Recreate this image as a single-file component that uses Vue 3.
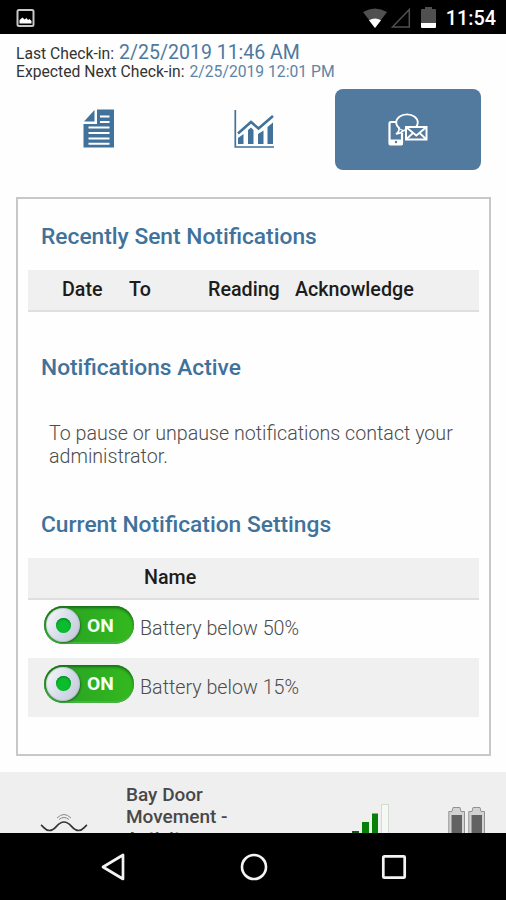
<script setup>
const columns = ['Date', 'To', 'Reading', 'Acknowledge']
const settings = ['Battery below 50%', 'Battery below 15%']
</script>

<template>
  <div class="screen">
    <header class="status">
      <svg class="picture" width="19" height="18" viewBox="0 0 19 18">
        <rect x="1.500" y="1" width="16" height="16" rx="1.500" fill="none" stroke="#c8c8c8" stroke-width="2" />
        <path d="M3.500 14.500V11L6.500 8.500L8.500 10.500L10.500 9L12 11L13.500 10L15.500 12V14.500Z" fill="#fff" />
      </svg>
      <div class="indicators">
        <svg width="26" height="20" viewBox="0 0 26 20">
          <path d="M1 4Q13-3 25 4L13 20Z" fill="#505050" />
          <path d="M7 12.200Q13 9 19 12.200L13 20Z" fill="#fff" />
        </svg>
        <svg width="20" height="20" viewBox="0 0 20 20">
          <path d="M18.300 1.500V19H1.500Z" fill="none" stroke="#505050" stroke-width="1.500" />
        </svg>
        <svg class="cell" width="15" height="22" viewBox="0 0 15 22">
          <path d="M0 3Q0 2 1 2H4V0H11V2H14Q15 2 15 3V16H0Z" fill="#505050" />
          <path d="M0 16H15V20Q15 21 14 21H1Q0 21 0 20Z" fill="#fff" />
        </svg>
        <span class="clock">11:54</span>
      </div>
    </header>

    <main class="page">
      <section class="checkins">
        <p class="last"><span>Last Check-in:</span><b>2/25/2019 11:46 AM</b></p>
        <p class="next"><span>Expected Next Check-in:</span><b>2/25/2019 12:01 PM</b></p>
      </section>

      <nav class="tabs">
        <button class="tab" aria-label="Report">
          <svg width="32" height="40" viewBox="0 0 32 40">
            <path d="M14 .5H31V38.500H.5V15H14Z" fill="#40729b" />
            <path d="M11.500 1V12.500H1Z" fill="#40729b" />
            <path d="M17 7.500H26.500M17 13H26.500M5.500 18.500H26.500M5.500 24H26.500M5.500 29.500H26.500M5.500 34.700H26.500" stroke="#fff" stroke-width="2" />
          </svg>
        </button>
        <button class="tab" aria-label="Chart">
          <svg width="40" height="40" viewBox="0 0 40 40">
            <path d="M1.300 1V38H40" fill="none" stroke="#40729b" stroke-width="1.700" />
            <path d="M4 24.500L17 13L24.500 19.500L39 7" fill="none" stroke="#40729b" stroke-width="2.600" />
            <path d="M4 35V29L9.500 25V35ZM14 35V21L17 18.500L19.500 21V35ZM24 35V25L29.500 21.500V35ZM33.500 35V18L39 13.500V35Z" fill="#40729b" />
          </svg>
        </button>
        <button class="tab active" aria-label="Notifications">
          <svg width="40" height="34" viewBox="0 0 40 34">
            <path d="M14 9H3Q1.500 9 1.500 10.500V30Q1.500 31.500 3 31.500H12.500Q14 31.500 14 30V20" fill="none" stroke="#fff" stroke-width="2.200" />
            <rect x="1" y="26.500" width="14" height="5.500" rx="1" fill="#fff" />
            <circle cx="8" cy="29" r="1.200" fill="#527a9e" />
            <path d="M11 15Q11.500 19 8 21Q13 20.500 16 17" fill="#527a9e" stroke="#fff" stroke-width="1.600" />
            <ellipse cx="19" cy="9.500" rx="10.800" ry="8.200" fill="#527a9e" stroke="#fff" stroke-width="1.800" />
            <path d="M12.300 14.500L16 16" stroke="#527a9e" stroke-width="2.200" />
            <rect x="18" y="14" width="20.500" height="12.500" fill="#527a9e" stroke="#fff" stroke-width="2" />
            <path d="M18 14L28.300 22.500L38.500 14M18 26.500L25 20M38.500 26.500L31.500 20" fill="none" stroke="#fff" stroke-width="1.800" />
          </svg>
        </button>
      </nav>

      <section class="card">
        <h2 class="sent">Recently Sent Notifications</h2>
        <div class="head columns">
          <span v-for="column in columns" :key="column">{{ column }}</span>
        </div>
        <h2 class="active-title">Notifications Active</h2>
        <p class="note">To pause or unpause notifications contact your administrator.</p>
        <h2 class="current">Current Notification Settings</h2>
        <div class="head name"><span>Name</span></div>
        <div v-for="item in settings" :key="item" class="setting">
          <button class="toggle"><i class="knob"></i><span>ON</span></button>
          <span class="label">{{ item }}</span>
        </div>
      </section>

      <section class="sensor">
        <svg class="wave" width="48" height="22" viewBox="0 0 48 22">
          <path d="M1 12C4 14 5 17.500 9.500 17.500C16 17.500 17 9 24 9C31 9 32 17.500 38.500 17.500C43 17.500 44 14 47 12" fill="none" stroke="#333" stroke-width="1.700" />
          <path d="M17 5Q24-2 31 5M19 6.500Q24 2.500 29 6.500" fill="none" stroke="#888" stroke-width="1" />
        </svg>
        <p class="title">Bay Door<br />Movement -<br />Activity</p>
        <svg class="signal" width="38" height="38" viewBox="0 0 38 38">
          <path d="M0 27H7V38H0Z" fill="#16551d" />
          <path d="M10 18H17V38H10ZM20 9.500H26V38H20Z" fill="#078009" />
          <rect x="29.500" y=".5" width="7" height="38" fill="#f6f8f6" stroke="#cfddcf" />
        </svg>
        <svg class="batteries" width="38" height="38" viewBox="0 0 38 38">
          <g v-for="x in [0, 20]" :key="x" :transform="`translate(${x} 0)`">
            <path d="M.8 38V5.500H4L5 1.500H12L13 5.500H16.500V38" fill="#d2d2d2" stroke="#929292" />
            <path d="M3.500 38V9H14V38Z" fill="#626262" />
          </g>
        </svg>
      </section>
    </main>

    <footer class="navbar">
      <svg width="26" height="28" viewBox="0 0 26 28"><path d="M23 2V26L3 14Z" fill="none" stroke="#f4f4f4" stroke-width="2.700" stroke-linejoin="round" /></svg>
      <svg width="28" height="28" viewBox="0 0 28 28"><circle cx="14" cy="14" r="12" fill="none" stroke="#f4f4f4" stroke-width="2.600" /></svg>
      <svg width="26" height="28" viewBox="0 0 26 28"><rect x="2.300" y="3.300" width="21.400" height="21.400" rx="1" fill="none" stroke="#f4f4f4" stroke-width="2.700" /></svg>
    </footer>
  </div>
</template>

<style>
body { margin: 0; background: #fff; }
</style>

<style scoped>
* { box-sizing: border-box; }
.screen { width: 506px; height: 900px; display: flex; flex-direction: column; overflow: hidden; background: #fefefe; font-family: Roboto, sans-serif; }
h2, p { margin: 0; }
button { border: 0; padding: 0; background: none; font-family: inherit; }
svg { display: block; flex: none; }
.status { height: 34px; flex: none; padding: 0 10px 0 16px; display: flex; align-items: center; justify-content: space-between; background: #000; }
.picture { margin-top: 1px; }
.indicators { display: flex; align-items: center; }
.indicators svg { margin-top: 1px; }
.indicators svg + svg { margin-left: 3px; }
.indicators .cell.cell { margin-left: 10px; }
.clock { margin-left: 10px; color: #fff; font-size: 19.800px; font-weight: 500; line-height: 32px; padding-top: 4px; }
.page { height: 799px; flex: none; overflow: hidden; }
.checkins { height: 55px; padding: 8px 16px 0; color: #333; }
.checkins p { display: flex; align-items: baseline; white-space: nowrap; font-size: 15.700px; }
.checkins b { margin-left: 5px; color: #4d799f; font-weight: 400; }
.checkins .last { height: 20px; line-height: 21px; }
.checkins .last b { font-size: 19.500px; }
.checkins .next { height: 18px; line-height: 20px; }
.checkins .next b { color: #6184a5; }
.tabs { display: grid; grid-template-columns: 155px 155px 146px; height: 81px; padding-left: 25px; }
.tab { display: flex; align-items: center; justify-content: center; padding-right: 8px; padding-bottom: 1px; }
.tab.active { padding: 0; background: #527a9e; border-radius: 8px; }
.card { width: 475px; height: 559px; margin: 27px 0 0 16px; padding: 0 10px; border: 2px solid #c8c8c8; background: #fefefe; }
h2 { padding-left: 13px; color: #40729b; font-size: 22.750px; line-height: 28px; font-weight: 500; white-space: nowrap; }
.sent { margin-top: 24px; }
.head { height: 42px; border-bottom: 2px solid #dfdfdf; background: #f0f0f0; color: #1c1c1c; font-size: 19.700px; line-height: 40px; font-weight: 500; white-space: nowrap; }
.columns { margin-top: 19px; padding-left: 34px; display: grid; grid-template-columns: 67px 79px 87px 1fr; }
.active-title { margin-top: 42px; }
.note { margin-top: 40px; padding-left: 21px; color: #4c4c4c; font-size: 19.670px; line-height: 23px; font-weight: 300; }
.current { margin-top: 43px; }
.name { margin-top: 19px; padding-left: 116px; }
.setting { height: 58px; display: flex; align-items: center; padding-left: 16px; }
.setting:last-child { height: 59px; background: #f0f0f0; }
.toggle { width: 90px; height: 38px; margin-top: -8px; padding: 2px; flex: none; display: flex; align-items: center; border-radius: 19px; background: linear-gradient(90deg, #269f25, #34b91e); box-shadow: inset 0 2px 3px #176b18, inset 0 -2px 1px #48b642; }
.knob { width: 34px; height: 34px; display: grid; place-items: center; border-radius: 50%; background: linear-gradient(120deg, #fafafa, #d5dbea 55%, #c3c8d5); box-shadow: 1px 1px 2px #246c24, inset 0 0 2px #8f9ba5; }
.knob::after { content: ''; width: 15px; height: 15px; border-radius: 50%; background: #0abc2e; box-shadow: inset 0 1px 2px #077b23; }
.toggle span { margin-left: 7px; color: #f3fff2; font-size: 19.200px; font-weight: 700; }
.label { margin: -1px 0 0 6px; color: #4c4c4c; font-size: 19.700px; font-weight: 300; }
.sensor { height: 61px; margin-top: 16px; padding-left: 40px; display: flex; overflow: hidden; background: #efefef; }
.wave { margin-top: 41px; }
.title { width: 140px; margin: 12px 0 0 38px; color: #484848; font-size: 19px; line-height: 22px; font-weight: 500; }
.signal { margin: 32px 0 0 86px; }
.batteries { margin: 34px 0 0 58px; }
.navbar { height: 67px; flex: none; display: flex; align-items: center; padding-left: 100px; background: #000; }
.navbar svg + svg { margin-left: 113.500px; }
</style>
